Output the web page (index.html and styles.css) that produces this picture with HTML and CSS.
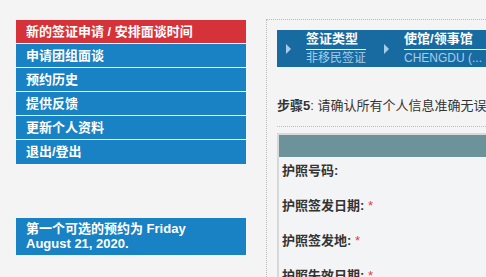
FILE: index.html
```html
<!DOCTYPE html>
<html lang="zh-CN">
<head>
  <meta charset="UTF-8"/>
  <title>签证预约</title>
  <link rel="stylesheet" href="styles.css">
</head>
<body>
  <div class="page">
    <aside class="sidebar">
      <ul class="side-menu">
        <li class="active"><a href="#">新的签证申请 / 安排面谈时间</a></li>
        <li><a href="#">申请团组面谈</a></li>
        <li><a href="#">预约历史</a></li>
        <li><a href="#">提供反馈</a></li>
        <li><a href="#">更新个人资料</a></li>
        <li><a href="#">退出/登出</a></li>
      </ul>
      <div class="first-date">第一个可选的预约为 Friday August 21, 2020.</div>
    </aside>

    <main class="content">
      <!-- progress bar -->
      <div class="steps">
        <div class="step">
          <span class="arrow"></span>
          <div class="step-text">
            <div class="step-title">签证类型</div>
            <div class="step-value">非移民签证</div>
          </div>
        </div>
        <div class="step wide">
          <span class="arrow"></span>
          <div class="step-text">
            <div class="step-title">使馆/领事馆</div>
            <div class="step-value">CHENGDU (...</div>
          </div>
        </div>
      </div>

      <p class="instruction"><b>步骤5</b>: 请确认所有个人信息准确无误，再点击继续按钮进入下一步。</p>

      <div class="form-box">
        <div class="form-head"></div>
        <div class="form-row">护照号码:</div>
        <div class="form-row">护照签发日期: <span class="req">*</span></div>
        <div class="form-row">护照签发地: <span class="req">*</span></div>
        <div class="form-row">护照失效日期: <span class="req">*</span></div>
      </div>
    </main>
  </div>
</body>
</html>
```

FILE: styles.css
```css
:root {
  --red:       #d6323a;
  --blue:      #1882c4;
  --dark-blue: #186ba0;
  --teal:      #6b9399;
  --light-txt: #a8cdeb;
  --text:      #333;
  --bg:        #f4f4f4;
}
* { box-sizing: border-box; margin: 0; padding: 0; }
html, body { overflow: hidden; }
body {
  font-family: "Liberation Sans", Arial, "Noto Sans CJK SC", sans-serif;
  font-size: 13px;
  background: var(--bg);
  color: var(--text);
}
.page {
  display: flex;
  align-items: flex-start;
  gap: 20px;
  width: 960px;
  padding: 19px 0 0 16px;
}

/* left column */
.sidebar { width: 230px; flex-shrink: 0; padding-top: 1px; }
.side-menu { list-style: none; }
.side-menu li {
  background: var(--blue);
  border-bottom: 1px solid #fff;
}
.side-menu li.active { background: var(--red); }
.side-menu li:last-child { border-bottom-color: var(--blue); }
.side-menu a {
  display: block;
  height: 23px;
  line-height: 23px;
  padding-left: 10px;
  color: #fff;
  font-weight: bold;
  text-decoration: none;
  white-space: nowrap;
}
.first-date {
  margin-top: 54px;
  background: var(--blue);
  color: #fff;
  font-weight: bold;
  line-height: 15px;
  padding: 3px 24px 4px 10px;
}

/* right column */
.content {
  flex: 1;
  border-top: 1px dotted #bbb;
  border-left: 1px dotted #bbb;
  padding: 10px 0 0 10px;
  min-height: 300px;
}
.steps {
  display: flex;
  height: 37px;
  background: var(--dark-blue);
  font-size: 12px;
}
.step {
  display: flex;
  align-items: center;
  padding-left: 9px;
  padding-right: 9px;
}
.step.wide { flex: 1; }
.arrow {
  width: 0;
  height: 0;
  border-top: 5px solid transparent;
  border-bottom: 5px solid transparent;
  border-left: 5px solid var(--light-txt);
  margin-right: 15px;
  margin-top: 1px;
}
.step-text { min-width: 60px; }
.step.wide .step-text { flex: 1; }
.step-title {
  color: #fff;
  font-weight: bold;
  font-size: 13px;
  line-height: 16px;
  padding-bottom: 2px;
  border-bottom: 1px solid #fff;
}
.step-value {
  color: var(--light-txt);
  font-size: 12px;
  line-height: 17px;
  white-space: nowrap;
}

.instruction {
  margin-top: 30px;
  line-height: 18px;
  white-space: nowrap;
  padding-bottom: 11px;
  border-bottom: 1px dotted #bbb;
}
.form-box {
  margin-top: 6px;
  background: #f3f4f6;
  border-top: 2px solid #d6dadb;
  border-left: 2px solid #d6dadb;
}
.form-head {
  height: 22px;
  background: var(--teal);
}
.form-row {
  height: 35px;
  padding: 5px 0 0 3px;
  line-height: 17px;
  font-weight: bold;
}
.req { color: #e8354f; font-weight: normal; }
```
